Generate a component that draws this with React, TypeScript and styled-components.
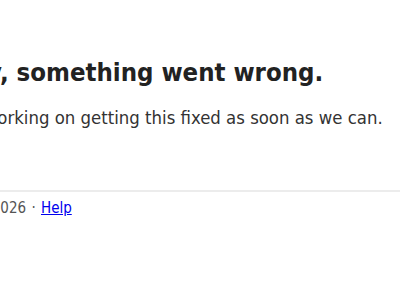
import React from "react";
import styled, { createGlobalStyle } from "styled-components";

const Global = createGlobalStyle`
  html, body { margin: 0; padding: 0; background: #fff; overflow: hidden; }
  body { font-family: "DejaVu Sans Condensed", "DejaVu Sans", Verdana, sans-serif; }
`;

const Page = styled.div`
  width: 400px;
  height: 300px;
  overflow: hidden;
`;

const Content = styled.main`
  margin-left: -68px;
  padding-top: 52px;
`;

const Title = styled.h1`
  margin: 0;
  font-size: 25.5px;
  font-weight: bold;
  color: #222;
  line-height: 40px;
`;

const Message = styled.p`
  margin: 12px 0 0;
  font-size: 18.4px;
  color: #333;
  line-height: 28px;
`;

const Footer = styled.footer`
  margin-top: 58px;
  border-top: 2px solid #ececec;
  padding: 7px 0 0 41px;
  font-size: 15px;
  color: #555;
  width: 600px;
  word-spacing: 1px;
`;

const Link = styled.a`
  color: #0000ee;
  text-decoration: underline;
`;

export default function App() {
  return (
    <Page>
      <Global />
      <Content>
        <Title>Sorry, something went wrong.</Title>
        <Message>We're working on getting this fixed as soon as we can.</Message>
        <Footer>
          © 2026 · <Link href="#">Help</Link>
        </Footer>
      </Content>
    </Page>
  );
}
